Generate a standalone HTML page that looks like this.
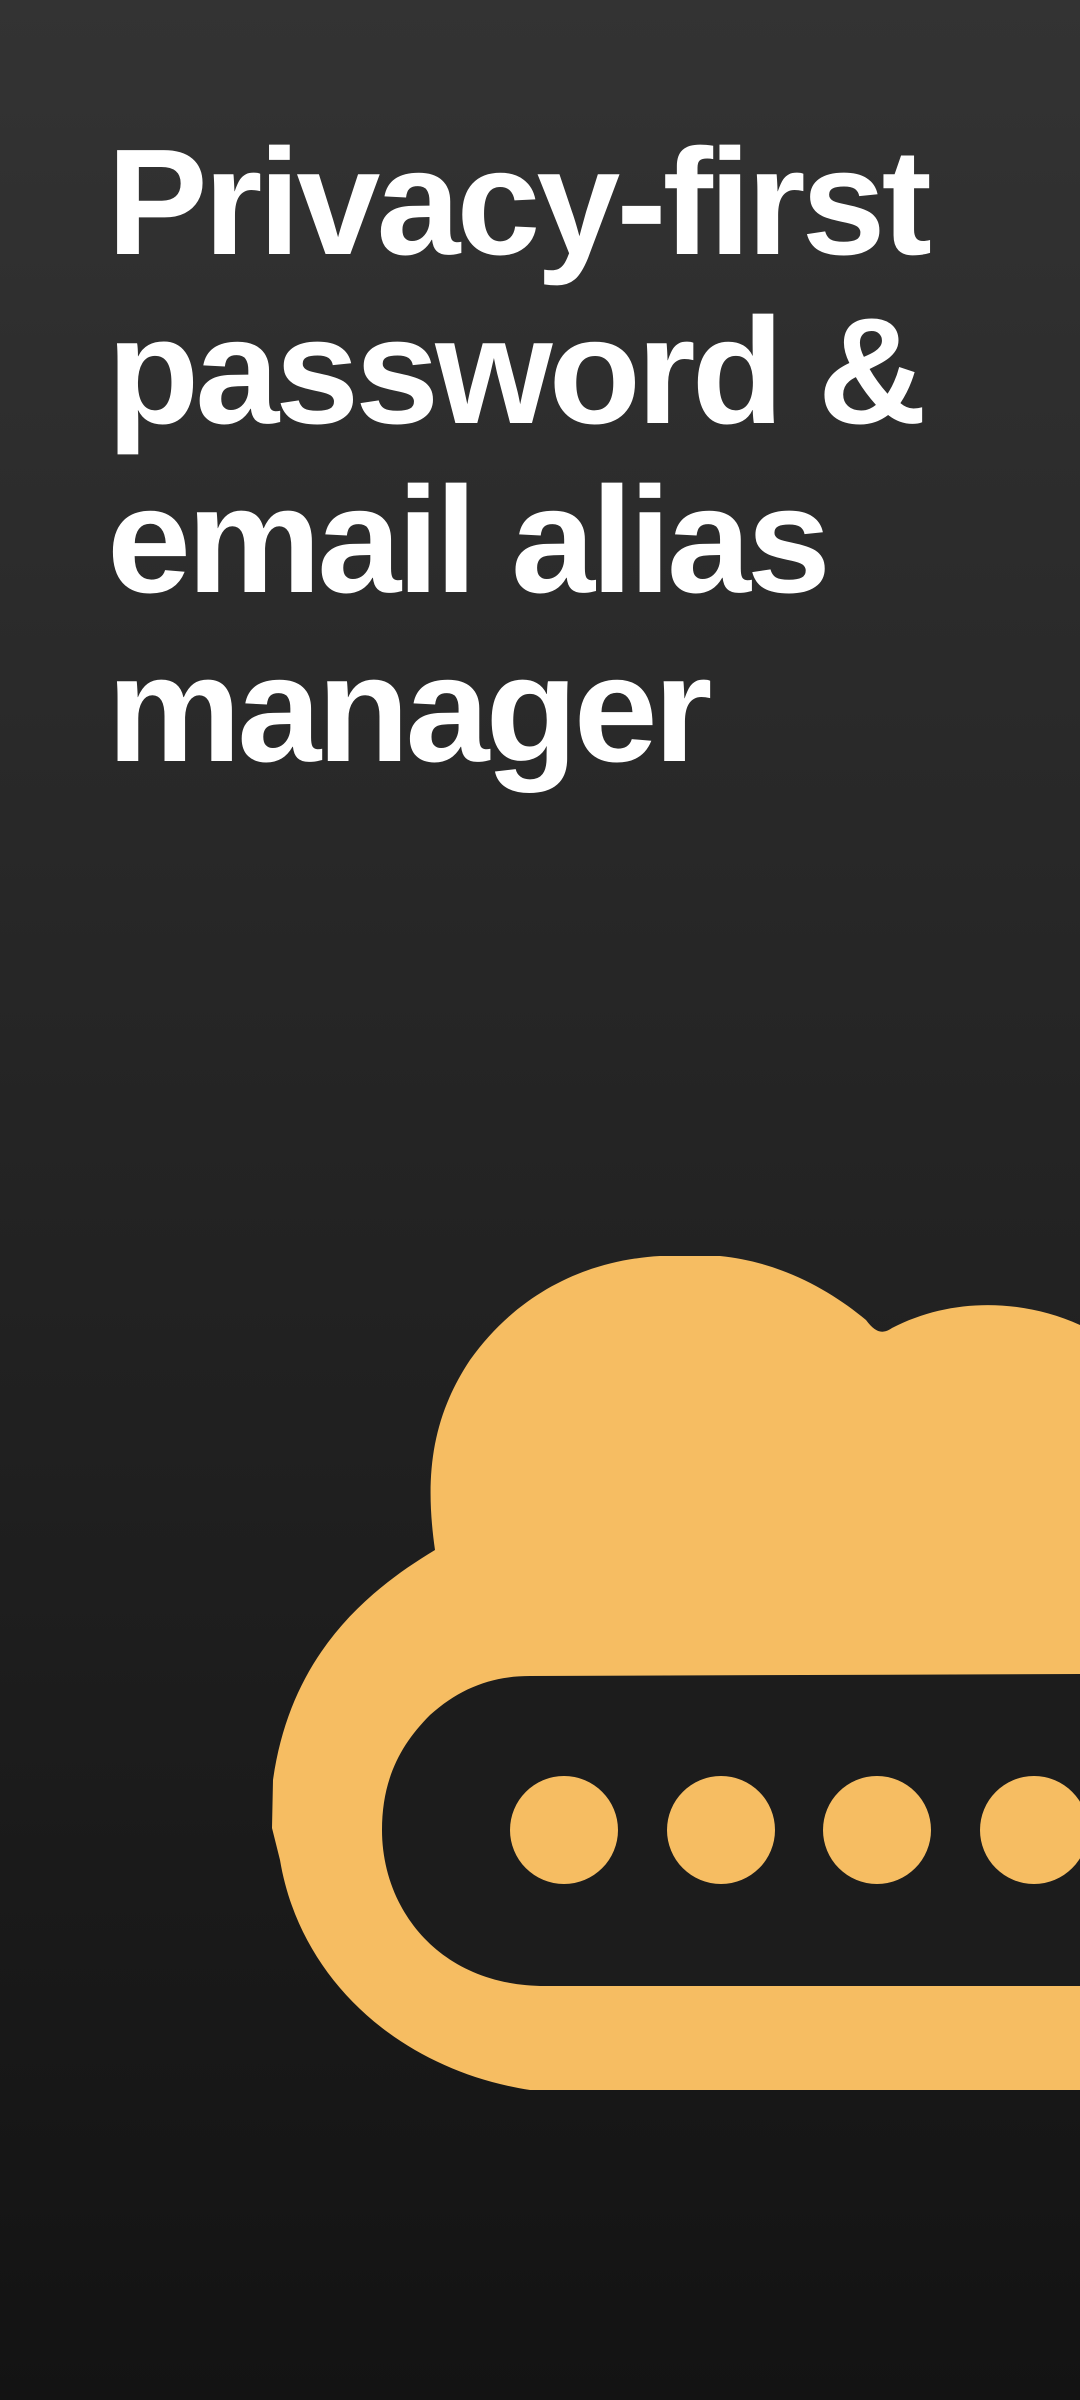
<!DOCTYPE html>
<html><head><meta charset="utf-8"><style>
html,body{margin:0;padding:0}
body{width:1080px;height:2400px;overflow:hidden;background:linear-gradient(#333333,#131313);position:relative;font-family:"Liberation Sans",sans-serif}
h1{position:absolute;left:107px;top:117px;margin:0;color:#fff;font-weight:bold;font-size:151px;line-height:169px;letter-spacing:-4px}
svg{position:absolute;left:0;top:0}
</style></head><body>
<h1>Privacy-first<br>password &amp;<br>email alias<br>manager</h1>
<svg width="1080" height="2400" viewBox="0 0 1080 2400">
<path fill="#f6bd62" d="M435,1550 C425,1480 430,1420 470,1360 C520,1290 590,1260 660,1256 L720,1256 C780,1262 830,1290 866,1320 C875,1332 882,1335 892,1328 C950,1298 1020,1298 1080,1325 L1080,2090 L530,2090 C400,2070 300,1980 280,1860 L272,1828 L273,1780 C290,1660 360,1595 435,1550 Z"/>
<path fill="#1c1c1c" d="M530,1676 L1080,1674 L1080,1986 L545,1986 C440,1986 382,1910 382,1830 C382,1780 400,1745 430,1715 C460,1688 492,1676 530,1676 Z"/>
<g fill="#f6bd62">
<circle cx="564" cy="1830" r="54"/>
<circle cx="721" cy="1830" r="54"/>
<circle cx="877" cy="1830" r="54"/>
<circle cx="1034" cy="1830" r="54"/>
</g>
</svg>
</body></html>
